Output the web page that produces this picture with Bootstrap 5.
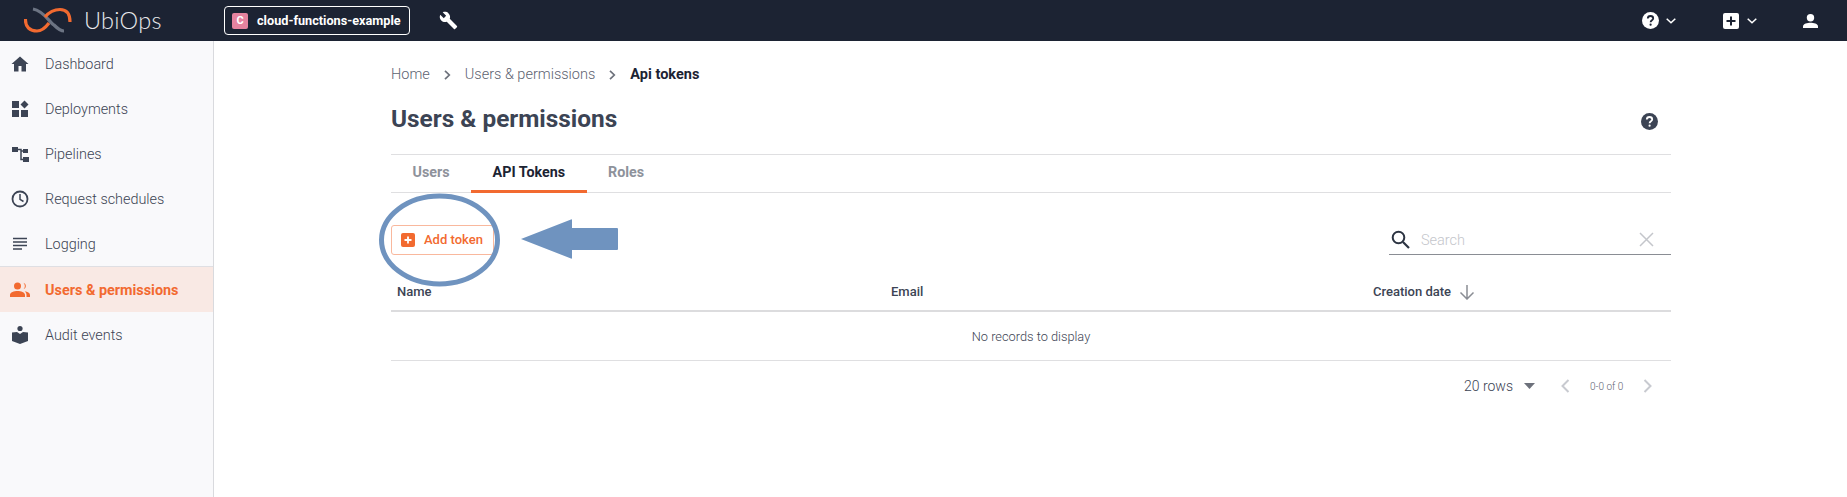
<!DOCTYPE html>
<html lang="en">
  <head>
    <meta charset="UTF-8" />
    <meta name="viewport" content="width=device-width, initial-scale=1" />
    <title>UbiOps - Api tokens</title>
    <link
      rel="stylesheet"
      href="https://cdn.jsdelivr.net/npm/bootstrap@5.3.0/dist/css/bootstrap.min.css"
    />
    <style>
      html, body { height: 100%; }
      body { font-family: Roboto, "Liberation Sans", sans-serif; font-size: 14px; color: #3c4454; background: #fff; overflow: hidden; }
      .topbar { height: 41px; background: #1c2333; padding-left: 24px; color: #fff; }
      .logo-text { font-family: Lato, Roboto, sans-serif; font-weight: 300; font-size: 23.5px; letter-spacing: .3px; margin-left: 7px; color: #e8e9ec; width: 140px; line-height: 1; }
      .ws-pill { width: 186px; height: 29px; border: 1px solid #fff; border-radius: 4px; padding-left: 7px; font-weight: 700; font-size: 12.7px; gap: 9px; }
      .ws-badge { width: 16px; height: 16px; background: #e5839f; border-radius: 2px; font-size: 11px; line-height: 16px; text-align: center; }
      .tool-btn { margin-left: 29px; }
      .top-right { margin-left: auto; }
      .top-help { width: 33px; gap: 7px; margin-right: 48px; }
      .top-add { width: 33px; gap: 8px; margin-right: 47px; }
      .top-user { margin-right: 29px; }
      .side { width: 214px; background: #f9f9fb; border-right: 1px solid #d9dade; }
      .side-item { height: 45px; padding-left: 10px; gap: 15px; font-weight: 300; font-size: 14.4px; color: #3c4454; text-decoration: none; }
      .side-item span { padding-top: 2px; }
      .side-icon { width: 20px; height: 20px; flex: none; }
      .side-item.on { height: 46px; background: #f9e9e4; color: #f26a30; font-weight: 700; font-size: 14.4px; border-top: 1px solid #dfdfe3; }
      .content-wrap { padding-left: 177px; padding-right: 176px; min-width: 0; }
      .crumbs { height: 24px; margin-top: 22px; font-weight: 300; font-size: 14.5px; color: #5d6371; gap: 14px; }
      .crumbs b { font-weight: 700; font-size: 14.5px; color: #1c2333; }
      .page-title { font-size: 24.4px; font-weight: 700; color: #3c4454; margin: 0 0 5px; line-height: 30px; }
      .title-row { margin-top: 17px; height: 50px; padding: 0 13px 15px 0; }
      .tab-bar { height: 39px; border-top: 1px solid #dfdfe1; border-bottom: 1px solid #dfdfe1; }
      .tab-item { height: 38px; padding: 0 21.5px; font-weight: 700; font-size: 14.3px; color: #8e929b; border-bottom: 3px solid transparent; }
      .tab-item.on { color: #1c2333; border-bottom-color: #f26a30; }
      .tools-row { margin-top: 32px; height: 31px; }
      .add-btn { width: 103px; height: 30px; border: 1px solid #f9b89d; border-radius: 3px; background: #fff; color: #f26a30; font-weight: 500; font-size: 13px; padding: 0 0 0 9px; gap: 9px; }
      .search-box { width: 282px; height: 30px; border-bottom: 1px solid #8a8d94; padding: 0 17px 0 2px; gap: 11px; }
      .search-box span { color: #c4c6cb; font-weight: 300; font-size: 14.5px; padding-top: 2px; }
      .grid-head { height: 56px; padding-top: 17px; border-bottom: 2px solid #dcdcde; font-weight: 500; font-size: 13px; color: #3c4454; }
      .grid-head .cell-name { width: 500px; padding-left: 6px; }
      .grid-head .cell-mail { width: 482px; }
      .grid-empty { height: 49px; padding-top: 2px; border-bottom: 1px solid #dfdfe1; font-weight: 300; font-size: 12.8px; color: #3c4454; }
      .pager { height: 50px; padding-right: 19px; }
      .rows-label { font-weight: 300; font-size: 14px; color: #3c4454; margin-right: 11px; }
      .pager-next { margin-left: 26px; }
      .pager-count { font-weight: 300; font-size: 10px; color: #5d6371; margin: 0 21px 0 20px; width: 32px; white-space: nowrap; }
      .stage { position: relative; }
      .note-mark { position: absolute; left: 0; top: 0; pointer-events: none; }
    </style>
  </head>
  <body class="d-flex flex-column">
    <nav class="topbar d-flex align-items-center flex-shrink-0">
      <!-- logo -->
      <svg width="53" height="28" viewBox="0 -2 53 28" fill="none">
        <path d="M9 0C20 2 25 13 30 16 34 20 37 22 40 22" stroke="#6c7483" stroke-width="3.200" />
        <path d="M1.500 10C1 18 6 22 13 22 18 22 22 18 25 14" stroke="#f26a30" stroke-width="3.200" />
        <path d="M21 8C26 2 30 .5 36 .5 42 .5 46 4 46 13" stroke="#f26a30" stroke-width="3.200" />
      </svg>
      <span class="logo-text">UbiOps</span>
      <div class="ws-pill d-flex align-items-center">
        <span class="ws-badge">C</span>
        <span>cloud-functions-example</span>
      </div>
      <svg class="tool-btn" width="19" height="19" viewBox="0 0 24 24" fill="#fff">
        <path d="M22.7 19l-9.1-9.1c.9-2.3.4-5-1.5-6.9-2-2-5-2.4-7.4-1.3L9 6 6 9 1.600 4.700C.4 7.100.9 10.100 2.900 12.100c1.900 1.900 4.600 2.400 6.900 1.500l9.100 9.100c.4.400 1 .4 1.400 0l2.300-2.300c.5-.4.5-1.100.1-1.400z" />
      </svg>
      <div class="top-right d-flex align-items-center">
        <div class="top-help d-flex align-items-center">
          <svg class="flex-shrink-0" width="17" height="17" viewBox="0 0 17 17"><circle cx="8.500" cy="8.500" r="8.500" fill="#fff" /><path d="M5.800 6.500c0-1.500 1.200-2.500 2.700-2.500s2.700 1 2.700 2.400c0 1.900-2.600 1.900-2.600 3.900" fill="none" stroke="#1c2333" stroke-width="1.800" /><circle cx="8.600" cy="12.700" r="1.100" fill="#1c2333" /></svg>
          <svg class="flex-shrink-0" width="10" height="6" viewBox="0 0 10 6"><path d="M.7.7 5 4.800 9.300.7" fill="none" stroke="#fff" stroke-width="1.500" /></svg>
        </div>
        <div class="top-add d-flex align-items-center">
          <svg class="flex-shrink-0" width="16" height="16" viewBox="0 0 16 16"><rect width="16" height="16" rx="2" fill="#fff" /><path d="M8 3.500v9M3.500 8h9" stroke="#1c2333" stroke-width="2" /></svg>
          <svg class="flex-shrink-0" width="10" height="6" viewBox="0 0 10 6"><path d="M.7.7 5 4.800 9.300.7" fill="none" stroke="#fff" stroke-width="1.500" /></svg>
        </div>
        <svg class="top-user" width="15" height="14" viewBox="0 0 15 14" fill="#fff"><circle cx="7.500" cy="3.700" r="3.700" /><path d="M0 14v-1.800C0 9.800 4.500 8.700 7.500 8.700s7.500 1.100 7.500 3.500V14z" /></svg>
      </div>
    </nav>

    <div class="d-flex flex-grow-1 stage">
      <aside class="side flex-shrink-0" id="sideNav"></aside>

      <main class="content-wrap flex-grow-1">
        <div class="crumbs d-flex align-items-center">
          <span>Home</span>
          <svg width="7" height="10" viewBox="0 0 7 10"><path d="M1 .8 5.300 5 1 9.200" fill="none" stroke="#6d717b" stroke-width="1.700" /></svg>
          <span>Users &amp; permissions</span>
          <svg width="7" height="10" viewBox="0 0 7 10"><path d="M1 .8 5.300 5 1 9.200" fill="none" stroke="#6d717b" stroke-width="1.700" /></svg>
          <b>Api tokens</b>
        </div>

        <div class="title-row d-flex justify-content-between align-items-center">
          <h1 class="page-title">Users &amp; permissions</h1>
          <svg width="17" height="17" viewBox="0 0 17 17"><circle cx="8.500" cy="8.500" r="8.500" fill="#3c4454" /><path d="M5.800 6.500c0-1.500 1.200-2.500 2.700-2.500s2.700 1 2.700 2.400c0 1.900-2.600 1.900-2.600 3.900" fill="none" stroke="#fff" stroke-width="1.800" /><circle cx="8.600" cy="12.700" r="1.100" fill="#fff" /></svg>
        </div>

        <div class="tab-bar d-flex">
          <div class="tab-item d-flex align-items-center">Users</div>
          <div class="tab-item on d-flex align-items-center">API Tokens</div>
          <div class="tab-item d-flex align-items-center">Roles</div>
        </div>

        <div class="tools-row d-flex justify-content-between align-items-start">
          <button type="button" class="add-btn d-flex align-items-center">
            <svg width="14" height="14" viewBox="0 0 14 14"><rect width="14" height="14" rx="2" fill="#f26a30" /><path d="M7 3.500v7M3.500 7h7" stroke="#fff" stroke-width="1.800" /></svg>
            Add token
          </button>
          <div class="search-box d-flex align-items-center">
            <svg class="flex-shrink-0" width="19" height="19" viewBox="0 0 19 19" fill="none"><circle cx="7.500" cy="7.500" r="5.800" stroke="#2c3442" stroke-width="2" /><path d="M12 12l6 6" stroke="#2c3442" stroke-width="2.200" /></svg>
            <span class="flex-grow-1">Search</span>
            <svg class="flex-shrink-0" width="15" height="15" viewBox="0 0 15 15"><path d="M1 1l13 13M14 1 1 14" stroke="#c4c6cb" stroke-width="1.500" /></svg>
          </div>
        </div>

        <div class="grid-head d-flex align-items-center">
          <div class="cell-name">Name</div>
          <div class="cell-mail">Email</div>
          <div class="d-flex align-items-center gap-2">
            Creation date
            <svg width="16" height="16" viewBox="0 0 16 16" fill="none"><path d="M8 1v14M1.500 8.500 8 15l6.500-6.500" stroke="#8a8d94" stroke-width="1.500" /></svg>
          </div>
        </div>
        <div class="grid-empty d-flex align-items-center justify-content-center">No records to display</div>

        <div class="pager d-flex align-items-center justify-content-end">
          <span class="rows-label">20 rows</span>
          <svg width="11" height="6" viewBox="0 0 11 6"><path d="M0 0h11L5.500 6z" fill="#6d717b" /></svg>
          <svg class="pager-next" width="9" height="14" viewBox="0 0 9 14"><path d="M7.500 1 1.500 7l6 6" fill="none" stroke="#c8cad0" stroke-width="2" /></svg>
          <span class="pager-count">0-0 of 0</span>
          <svg width="9" height="14" viewBox="0 0 9 14"><path d="M1.500 1l6 6-6 6" fill="none" stroke="#c8cad0" stroke-width="2" /></svg>
        </div>
      </main>

      <!-- annotation drawn on top of the screenshot -->
      <svg class="note-mark" width="640" height="260" viewBox="0 41 640 260" fill="none">
        <ellipse cx="439.500" cy="240" rx="58" ry="44" stroke="#6f93bf" stroke-width="5" />
        <path d="M521 239 571 219.500Q572 219 572 220V228H617Q618 228 618 229V249Q618 250 617 250H572V258Q572 259 571 258.500Z" fill="#6f93bf" />
      </svg>
    </div>

    <script>
      const sideIcons = {
        home: '<path d="M10 2.500 1.500 10H4v7.500h4.500V12h3v5.500H16V10h2.500z" fill="currentColor"/>',
        deploy: '<path d="M2 2h7v7H2zM2 11h7v7H2zM11 11h7v7h-7zM14.500 1.500 18.500 5.500 14.500 9.500 10.500 5.500z" fill="currentColor"/>',
        pipe: '<path d="M2 3h6v5H2zM13 5h5v4h-5zM13 13h6v5h-6z" fill="currentColor"/><path d="M8 5.500h3v10h2M11 7h2" stroke="currentColor" stroke-width="1.500" fill="none"/>',
        clock: '<circle cx="10" cy="10" r="7.500" fill="none" stroke="currentColor" stroke-width="1.800"/><path d="M10 5v5.300l3.500 2.200" fill="none" stroke="currentColor" stroke-width="1.500"/>',
        log: '<path d="M3 4.500h14M3 8h14M3 11.500h14M3 15h9" stroke="currentColor" stroke-width="1.600"/>',
        users: '<circle cx="7.500" cy="6" r="3.500" fill="currentColor"/><path d="M13.500 2.800a3.400 3.400 0 0 1 0 6.500 5 5 0 0 0 0-6.500z" fill="currentColor"/><path d="M0 17v-2c0-2.800 4-4 7.500-4s7.500 1.200 7.500 4v2zM16.500 17v-2c0-1.500-.7-2.800-1.800-3.700 2.800.3 5.300 1.500 5.300 3.700v2z" fill="currentColor"/>',
        audit: '<circle cx="10" cy="3.500" r="2.600" fill="currentColor"/><path d="M2 7.500 7 7 10 9 13 7 18 7.500V16L10 19 2 16z" fill="currentColor"/>',
      };
      const sideItems = [
        ["home", "Dashboard"],
        ["deploy", "Deployments"],
        ["pipe", "Pipelines"],
        ["clock", "Request schedules"],
        ["log", "Logging"],
        ["users", "Users & permissions", true],
        ["audit", "Audit events"],
      ];
      const sideNav = document.getElementById("sideNav");
      sideItems.forEach(function (item) {
        const link = document.createElement("a");
        link.href = "#";
        link.className = "side-item d-flex align-items-center" + (item[2] ? " on" : "");
        link.innerHTML =
          '<svg class="side-icon" viewBox="0 0 20 20">' + sideIcons[item[0]] + "</svg><span></span>";
        link.querySelector("span").textContent = item[1];
        sideNav.appendChild(link);
      });
    </script>
    <script src="https://cdn.jsdelivr.net/npm/bootstrap@5.3.0/dist/js/bootstrap.bundle.min.js"></script>
  </body>
</html>
